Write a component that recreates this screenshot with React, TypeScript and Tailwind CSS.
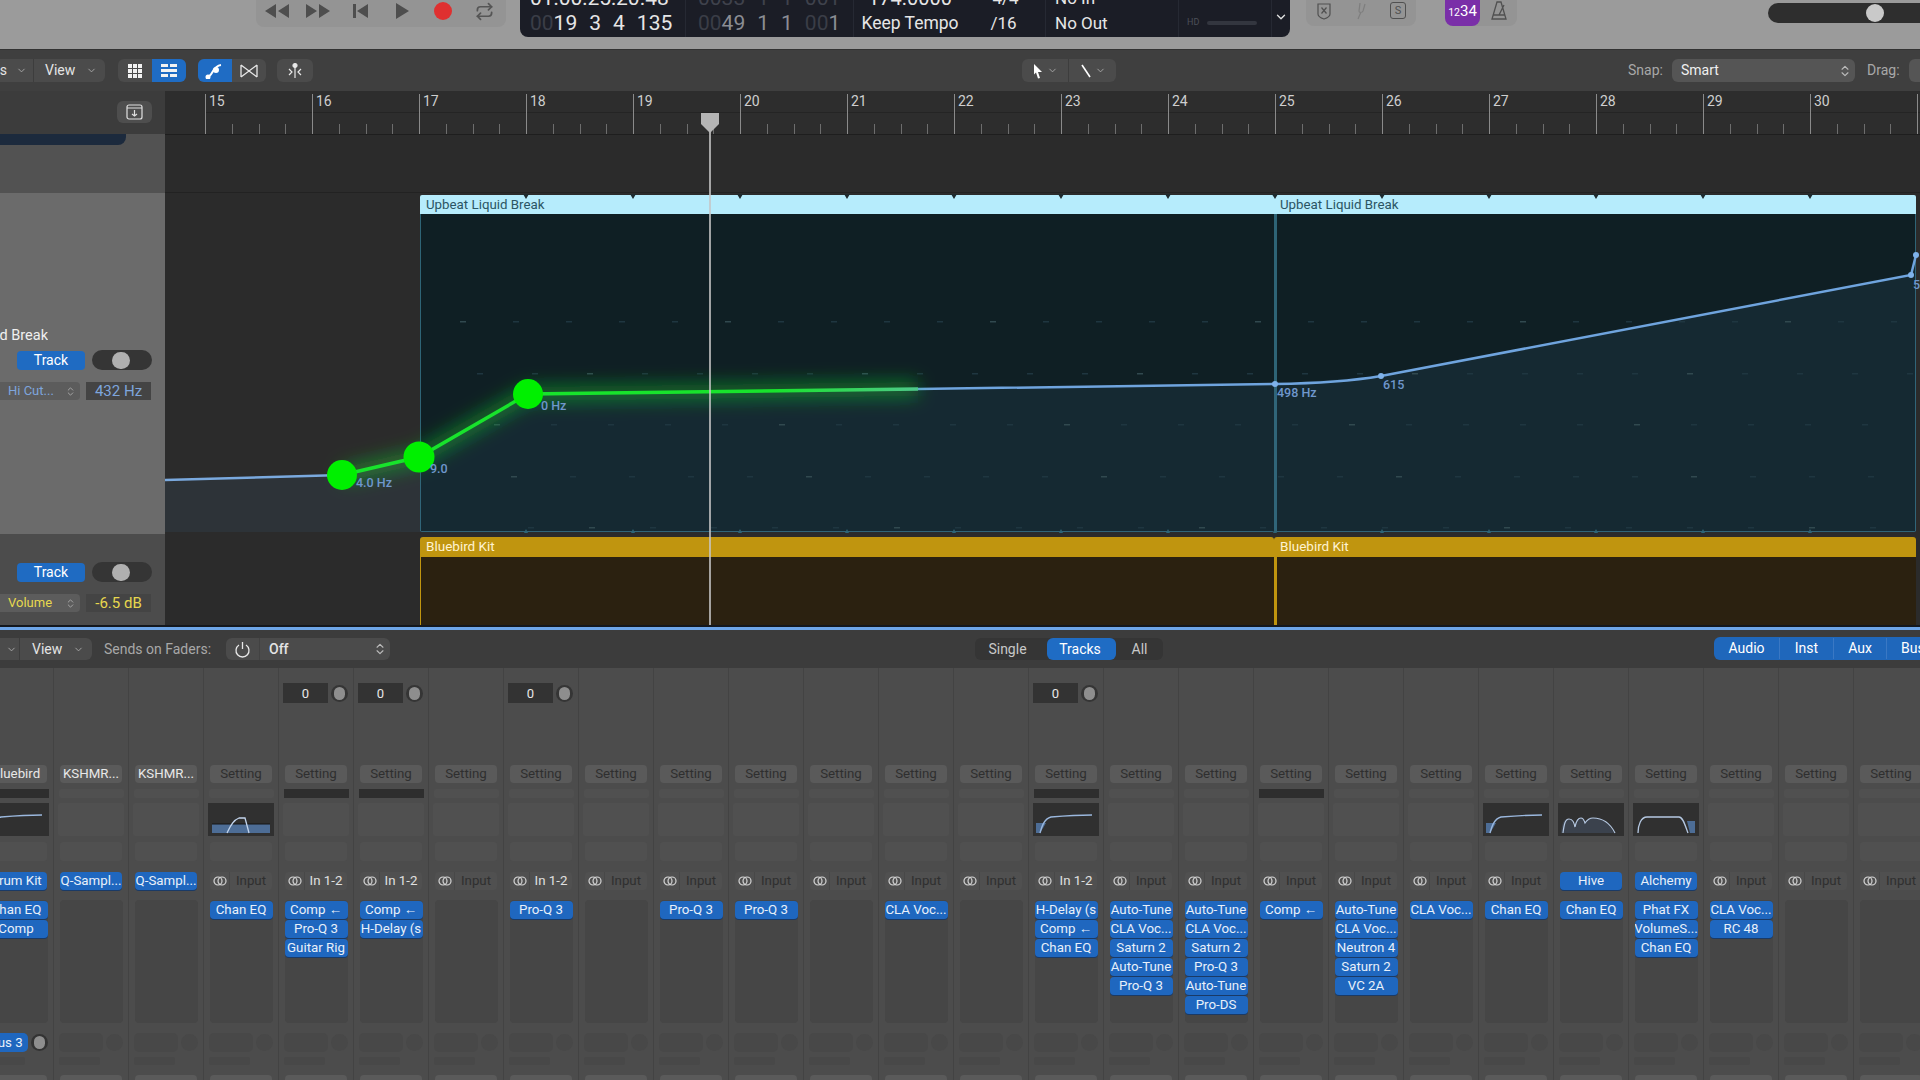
import { Repeat, ChevronDown, ChevronsUpDown } from 'lucide-react';

// ── Bars shown in the ruler
const BARS = [15, 16, 17, 18, 19, 20, 21, 22, 23, 24, 25, 26, 27, 28, 29, 30, 31];

type Eq = 'hp' | 'bell' | 'hive' | 'band';

interface StripData {
  top: string;
  gain?: boolean;
  bar?: boolean;
  eq?: Eq;
  input?: string;
  inst?: string;
  plugins?: string[];
  send?: string;
}

const STRIPS: StripData[] = [
  { top: 'Bluebird', bar: true, eq: 'hp', inst: 'Drum Kit', plugins: ['Chan EQ', 'Comp'], send: 'Bus 3' },
  { top: 'KSHMR...', inst: 'Q-Sampl...' },
  { top: 'KSHMR...', inst: 'Q-Sampl...' },
  { top: 'Setting', eq: 'bell', input: 'Input', plugins: ['Chan EQ'] },
  { top: 'Setting', gain: true, bar: true, input: 'In 1-2', plugins: ['Comp ←', 'Pro-Q 3', 'Guitar Rig'] },
  { top: 'Setting', gain: true, bar: true, input: 'In 1-2', plugins: ['Comp ←', 'H-Delay (s'] },
  { top: 'Setting', input: 'Input' },
  { top: 'Setting', gain: true, input: 'In 1-2', plugins: ['Pro-Q 3'] },
  { top: 'Setting', input: 'Input' },
  { top: 'Setting', input: 'Input', plugins: ['Pro-Q 3'] },
  { top: 'Setting', input: 'Input', plugins: ['Pro-Q 3'] },
  { top: 'Setting', input: 'Input' },
  { top: 'Setting', input: 'Input', plugins: ['CLA Voc...'] },
  { top: 'Setting', input: 'Input' },
  { top: 'Setting', gain: true, bar: true, eq: 'hp', input: 'In 1-2', plugins: ['H-Delay (s', 'Comp ←', 'Chan EQ'] },
  { top: 'Setting', input: 'Input', plugins: ['Auto-Tune', 'CLA Voc...', 'Saturn 2', 'Auto-Tune', 'Pro-Q 3'] },
  { top: 'Setting', input: 'Input', plugins: ['Auto-Tune', 'CLA Voc...', 'Saturn 2', 'Pro-Q 3', 'Auto-Tune', 'Pro-DS'] },
  { top: 'Setting', bar: true, input: 'Input', plugins: ['Comp ←'] },
  { top: 'Setting', input: 'Input', plugins: ['Auto-Tune', 'CLA Voc...', 'Neutron 4', 'Saturn 2', 'VC 2A'] },
  { top: 'Setting', input: 'Input', plugins: ['CLA Voc...'] },
  { top: 'Setting', eq: 'hp', input: 'Input', plugins: ['Chan EQ'] },
  { top: 'Setting', eq: 'hive', inst: 'Hive', plugins: ['Chan EQ'] },
  { top: 'Setting', eq: 'band', inst: 'Alchemy', plugins: ['Phat FX', 'VolumeS...', 'Chan EQ'] },
  { top: 'Setting', input: 'Input', plugins: ['CLA Voc...', 'RC 48'] },
  { top: 'Setting', input: 'Input' },
  { top: 'Setting', input: 'Input' },
];

function Chevron({ className = '' }: { className?: string }) {
  return <ChevronDown size={11} strokeWidth={2} className={className} />;
}

function TransportIcon({ d }: { d: string }) {
  return (
    <div className="flex w-[41.6px] justify-center">
      <svg width="28" height="20" viewBox="0 0 28 20" fill="#4e4e4e">
        <path d={d} />
      </svg>
    </div>
  );
}

function TransportBar() {
  return (
    <div className="flex h-[27px] w-[250px] items-start rounded-b-lg bg-[#949494] pt-[1px] ml-[256px]">
      <TransportIcon d="M13 3v14L2 10zM26 3v14L15 10z" />
      <TransportIcon d="M2 3v14l11-7zM15 3v14l11-7z" />
      <TransportIcon d="M7 3h3v14H7zM22 3v14L11 10z" />
      <TransportIcon d="M8 2v16l13-8z" />
      <div className="flex w-[41.6px] justify-center pt-[1px]">
        <div className="h-[18px] w-[18px] rounded-full bg-[#df3030]" />
      </div>
      <div className="flex w-[41.6px] justify-center pt-[1px]">
        <Repeat size={19} strokeWidth={2.2} className="text-[#555]" />
      </div>
    </div>
  );
}

function Lcd() {
  return (
    <div className="ml-[14px] flex h-[37px] w-[770px] overflow-hidden rounded-b-lg bg-[#1b1d26] text-[21px] leading-[25px] text-[#e6e6e6]">
      <div className="flex w-[166px] shrink-0 flex-col justify-end pb-[1px] pl-[10px] border-r border-[#262933]">
        <div className="whitespace-nowrap">01:00:25:20.48</div>
        <div className="flex gap-3 whitespace-nowrap">
          <span>
            <span className="text-[#3a3d47]">00</span>19
          </span>
          <span>3</span>
          <span>4</span>
          <span>135</span>
        </div>
      </div>
      <div className="flex w-[168px] shrink-0 flex-col justify-end pb-[1px] pl-[12px] text-[#8b8d94] border-r border-[#262933]">
        <div className="flex gap-3 whitespace-nowrap text-[#3f424c]">
          <span>0033</span>
          <span>1</span>
          <span>1</span>
          <span>001</span>
        </div>
        <div className="flex gap-3 whitespace-nowrap">
          <span>
            <span className="text-[#3a3d47]">00</span>49
          </span>
          <span>1</span>
          <span>1</span>
          <span>
            <span className="text-[#3a3d47]">00</span>1
          </span>
        </div>
      </div>
      <div className="flex w-[112px] shrink-0 flex-col items-center justify-end pb-[1px] text-[17.5px]">
        <div className="text-[20px]">174.0000</div>
        <div>Keep Tempo</div>
      </div>
      <div className="flex w-[80px] shrink-0 flex-col items-center justify-end pb-[1px] text-[17px] border-r border-[#262933]">
        <div>4/4</div>
        <div className="pr-[4px]">/16</div>
      </div>
      <div className="flex w-[133px] shrink-0 flex-col justify-end pb-[1px] pl-[9px] text-[17px] border-r border-[#262933]">
        <div>No In</div>
        <div>No Out</div>
      </div>
      <div className="flex w-[93px] shrink-0 items-center gap-2 pl-[8px] pt-[8px] border-r border-[#262933]">
        <span className="text-[9px] leading-none text-[#4c4f58]">HD</span>
        <div className="h-[4px] w-[50px] rounded-full bg-[#33363f]" />
      </div>
      <div className="flex flex-1 items-center justify-center pb-[3px]">
        <ChevronDown size={14} strokeWidth={2.4} className="text-[#ddd]" />
      </div>
    </div>
  );
}

function HeaderRight() {
  return (
    <>
      <div className="ml-[16px] flex h-[26px] w-[110px] items-start justify-between rounded-b-lg bg-[#949494] px-[10px] pt-[2px]">
        <svg width="16" height="18" viewBox="0 0 16 18" fill="none" stroke="#505050" strokeWidth="1.2">
          <path d="M2 2h12v10c0 2-3 4-6 5-3-1-6-3-6-5z" />
          <path d="M5.5 5.5l5 6M10.5 5.5l-5 6" />
        </svg>
        <svg width="16" height="18" viewBox="0 0 16 18" fill="none" stroke="#7e7e7e" strokeWidth="1.2">
          <path d="M7 1l-1 8c0 2 3 2 4 0l2-7M8 10l-3 7" />
        </svg>
        <div className="flex h-[17px] w-[16px] items-center justify-center rounded-[3px] border border-[#505050] text-[11px] leading-none text-[#505050]">
          S
        </div>
      </div>
      <div className="ml-[29px] flex h-[26px] w-[72px] items-start rounded-b-lg bg-[#949494]">
        <div className="flex h-[26px] w-[35px] items-baseline justify-center rounded-b-lg bg-[#7a2fa8] pt-[4px] text-[15px] leading-none text-white">
          <span className="text-[10.5px]">12</span>34
        </div>
        <div className="flex flex-1 justify-center pt-[1px]">
          <svg width="18" height="20" viewBox="0 0 18 20" fill="none" stroke="#505050" strokeWidth="1.3">
            <path d="M7 1h4l5 17H2zM3 14h12M9 14l5-10" />
          </svg>
        </div>
      </div>
      <div className="relative ml-[251px] mt-[3px] h-[20px] w-[160px] rounded-l-full bg-[#2e2e2e]">
        <div className="absolute left-[98px] top-[1px] h-[18px] w-[18px] rounded-full bg-[#c9c9c9]" />
      </div>
    </>
  );
}

function ToolGroupBtn({ active, children }: { active?: boolean; children: React.ReactNode }) {
  return (
    <div className={active ? 'flex h-full w-[34px] items-center justify-center bg-[#1f6cc4]' : 'flex h-full w-[34px] items-center justify-center'}>
      {children}
    </div>
  );
}

function Toolbar() {
  return (
    <div className="flex h-[42px] shrink-0 items-center border-t border-[#323232] bg-[#3f3f3f] text-[14px] text-[#e4e4e4] [&>*]:shrink-0">
      <div className="flex h-[23px] w-[105px] items-center rounded-r-md bg-[#4b4b4b]">
        <div className="flex h-full w-[34px] shrink-0 items-center justify-end gap-[9px] overflow-hidden border-r border-[#3d3d3d] pr-[6px]">
          <span>Functions</span>
          <Chevron className="shrink-0 text-[#aaa]" />
        </div>
        <span className="ml-[11px]">View</span>
        <Chevron className="ml-[11px] text-[#aaa]" />
      </div>
      <div className="ml-[13px] flex h-[23px] overflow-hidden rounded-md bg-[#4b4b4b]">
        <ToolGroupBtn>
          <svg width="16" height="16" viewBox="0 0 16 16" fill="#f2f2f2">
            <path d="M1 1h4v4H1zM6 1h4v4H6zM11 1h4v4h-4zM1 6h4v4H1zM6 6h4v4H6zM11 6h4v4h-4zM1 11h4v4H1zM6 11h4v4H6zM11 11h4v4h-4z" />
          </svg>
        </ToolGroupBtn>
        <ToolGroupBtn active>
          <svg width="18" height="16" viewBox="0 0 18 16" fill="#f2f2f2">
            <path d="M1 1h7v3H1zM10 1h7v3h-7zM1 6h16v3H1zM1 11h7v3H1zM10 11h7v3h-7z" />
          </svg>
        </ToolGroupBtn>
      </div>
      <div className="ml-[12px] flex h-[23px] overflow-hidden rounded-md bg-[#4b4b4b]">
        <ToolGroupBtn active>
          <svg width="20" height="16" viewBox="0 0 20 16" fill="none" stroke="#fff" strokeWidth="2">
            <path d="M2 14c6 0 5-11 14-12" />
            <circle cx="3" cy="14" r="1.5" fill="#fff" />
            <circle cx="11" cy="7" r="2" fill="#fff" />
          </svg>
        </ToolGroupBtn>
        <ToolGroupBtn>
          <svg width="20" height="16" viewBox="0 0 20 16" fill="none" stroke="#e8e8e8" strokeWidth="1.3">
            <path d="M2 2l16 12M2 14L18 2M2 2v12M18 2v12" />
          </svg>
        </ToolGroupBtn>
      </div>
      <div className="ml-[11px] flex h-[23px] w-[36px] items-center justify-center rounded-md bg-[#4b4b4b]">
        <svg width="18" height="18" viewBox="0 0 18 18" fill="none" stroke="#e8e8e8" strokeWidth="1.2">
          <path d="M9 2v14M3 7l3 3-3 3M15 7l-3 3 3 3" />
          <circle cx="9" cy="3.5" r="2" fill="#e8e8e8" />
        </svg>
      </div>
      <div className="ml-[709px] flex h-[23px] w-[94px] items-center rounded-md bg-[#4b4b4b]">
        <div className="flex h-full w-[47px] items-center justify-center gap-[3px] border-r border-[#3d3d3d]">
          <svg width="12" height="16" viewBox="0 0 12 16" fill="#fff">
            <path d="M2 1l8 8H6l2 6-2 .5-2-6-2 2z" />
          </svg>
          <Chevron className="text-[#aaa]" />
        </div>
        <div className="flex h-full flex-1 items-center justify-center gap-[3px]">
          <svg width="12" height="16" viewBox="0 0 12 16" fill="none" stroke="#fff" strokeWidth="1.6">
            <path d="M2 2l8 12" />
          </svg>
          <Chevron className="text-[#aaa]" />
        </div>
      </div>
      <span className="ml-[512px] w-[39px] text-[#a8a8a8]">Snap:</span>
      <div className="ml-[5px] flex h-[23px] w-[183px] items-center justify-between rounded-md bg-[#555] pl-[9px] pr-[3px] text-[#f0f0f0]">
        <span>Smart</span>
        <ChevronsUpDown size={14} className="text-[#bbb]" />
      </div>
      <span className="ml-[12px] w-[37px] text-[#a8a8a8]">Drag:</span>
      <div className="ml-[5px] h-[23px] w-[20px] rounded-l-md bg-[#555]" />
    </div>
  );
}

function LeftPanel() {
  return (
    <div className="flex w-[165px] shrink-0 flex-col">
      <div className="flex h-[43px] items-start justify-end bg-[#3c3c3c] pr-[13px] pt-[10px]">
        <div className="flex h-[22px] w-[35px] items-center justify-center rounded-md bg-[#4e4e4e]">
          <svg width="17" height="16" viewBox="0 0 17 16" fill="none" stroke="#e0e0e0" strokeWidth="1.2">
            <rect x="1" y="1" width="15" height="14" rx="2" />
            <path d="M1 4h15M8.5 6v6M6 10l2.5 2 2.5-2" />
          </svg>
        </div>
      </div>
      <div className="h-[59px] bg-[#525252]">
        <div className="h-[11px] w-[126px] rounded-br-lg bg-[#1c2a3d]" />
      </div>
      <div className="flex h-[341px] flex-col bg-[#6b6b6b] pt-[132px] text-[14.5px]">
        <div className="-ml-[12px] w-[60px] overflow-hidden whitespace-nowrap leading-[22px] text-[#f0f0f0] [direction:rtl]">
          Upbeat Liquid Break
        </div>
        <AutomationControls param="Hi Cut..." value="432 Hz" color="text-[#7ea5dc]" gap="mt-[3px]" />
      </div>
      <div className="flex h-[91px] flex-col bg-[#4c4c4c] pt-[24px] text-[14px]">
        <AutomationControls param="Volume" value="-6.5 dB" color="text-[#e8d84e]" gap="mt-[4px]" />
      </div>
    </div>
  );
}

function AutomationControls({ param, value, color, gap }: { param: string; value: string; color: string; gap: string }) {
  return (
    <>
      <div className={`flex items-center pl-[17px] ${gap}`}>
        <div className="flex h-[19px] w-[68px] items-center justify-center rounded-[4px] bg-[#1f6bc2] text-[14px] text-white">Track</div>
        <div className="relative ml-[7px] h-[20px] w-[60px] rounded-full bg-[#353535]">
          <div className="absolute left-[20px] top-[1.5px] h-[17px] w-[18px] rounded-full bg-[#b0b0b0]" />
        </div>
      </div>
      <div className="mt-[12px] flex items-center">
        <div className={`flex h-[18px] w-[80px] items-center justify-between rounded-r-[4px] bg-[#5c5c5c] pl-[8px] pr-[4px] text-[13px] ${color}`}>
          <span>{param}</span>
          <ChevronsUpDown size={11} className="text-[#aaa]" />
        </div>
        <div className={`ml-[6px] flex h-[18px] w-[65px] items-center justify-center bg-[#444] text-[15px] ${color}`}>{value}</div>
      </div>
    </>
  );
}

function Ruler() {
  return (
    <div className="flex h-[43px] items-end overflow-hidden bg-[#2d2d2d] pl-[40px]">
      {BARS.map((n) => (
        <div key={n} className="h-[40px] w-[107px] shrink-0 border-l border-[#8a8a8a]">
          <div className="h-[19px] border-b border-[#242424] pl-[3px] text-[14px] leading-[14px] text-[#cfcfcf]">{n}</div>
          <div className="flex h-[21px] items-end">
            <div className="h-[10px] w-[26.75px] border-r border-[#6d6d6d]" />
            <div className="h-[10px] w-[26.75px] border-r border-[#6d6d6d]" />
            <div className="h-[10px] w-[26.75px] border-r border-[#6d6d6d]" />
          </div>
        </div>
      ))}
    </div>
  );
}

const NOTCHES = [526, 633, 740, 847, 954, 1061, 1168, 1275, 1382, 1489, 1596, 1703, 1810];

function Overlay() {
  const dashes: [number, number][] = [];
  [321, 373, 424, 476, 527].forEach((y, r) => {
    for (let x = 460 + r * 17; x < 1910; x += 53 + r * 2) dashes.push([x, y]);
  });
  return (
    <svg className="pointer-events-none absolute left-0 top-0" width="1755" height="534" viewBox="165 91 1755 534" fill="none">
      <defs>
        <filter id="glow" x="-20%" y="-60%" width="140%" height="220%">
          <feGaussianBlur stdDeviation="9" />
        </filter>
        <linearGradient id="greenFade" gradientUnits="userSpaceOnUse" x1="342" y1="0" x2="918" y2="0">
          <stop offset="0.75" stopColor="#18e32c" />
          <stop offset="1" stopColor="#4fc98a" />
        </linearGradient>
      </defs>
      <polygon points="165,480 342,475 419,457 528,394 918,389 1275,384 1381,376 1911,275 1916,255 1916,532 165,532" fill="#3c6e96" fillOpacity="0.13" />
      {dashes.map(([x, y], i) => (
        <rect key={i} x={x} y={y} width="6" height="1.5" fill={i % 5 === 0 ? '#31494f' : '#1f3640'} />
      ))}
      {NOTCHES.map((x) => (
        <g key={x}>
          <polygon points={`${x - 3},194 ${x + 3},194 ${x},199`} fill="#1e2a2e" />
          <polygon points={`${x - 2},533 ${x + 2},533 ${x},529`} fill="#2e6476" />
        </g>
      ))}
      <polyline points="165,480 342,475" stroke="#7aa9de" strokeWidth="2.5" />
      <path d="M918,389 L1275,384 Q1340,383 1381,376 L1911,275 L1916,255" stroke="#6fa4de" strokeWidth="2.5" />
      <polyline points="342,475 419,457 528,394 918,389" stroke="#14d82a" strokeOpacity="0.45" strokeWidth="16" filter="url(#glow)" />
      <polyline points="342,475 419,457 528,394 918,389" stroke="url(#greenFade)" strokeWidth="3.5" />
      <circle cx="342" cy="475" r="15" fill="#00f000" />
      <circle cx="419" cy="457" r="15.5" fill="#00f000" />
      <circle cx="528" cy="394" r="15" fill="#00f000" />
      <circle cx="1275" cy="384" r="3" fill="#7fb2ea" />
      <circle cx="1381" cy="376" r="3" fill="#7fb2ea" />
      <circle cx="1911" cy="275" r="3" fill="#7fb2ea" />
      <circle cx="1916" cy="255" r="3" fill="#7fb2ea" />
      <g fill="#6f97cc" fontSize="12.5" fontFamily="Roboto, sans-serif" fontWeight="500">
        <text x="356" y="487">4.0 Hz</text>
        <text x="430" y="473">9.0</text>
        <text x="541" y="410">0 Hz</text>
        <text x="1277" y="397">498 Hz</text>
        <text x="1383" y="389">615</text>
        <text x="1913" y="289">5</text>
      </g>
      <line x1="710" y1="125" x2="710" y2="625" stroke="#c6c6c6" strokeWidth="1.6" />
      <path d="M701 113h18v11l-9 9-9-9z" fill="#b5b5b5" />
    </svg>
  );
}

function Arrange() {
  return (
    <div className="relative flex flex-1 flex-col bg-[#2b2b2b]">
      <Ruler />
      <div className="h-[59px] border-y border-t-[#1e1e1e] border-b-[#222]" />
      <div className="flex h-[341px] pl-[255px] pt-[2px]">
        <AutomationRegion width="w-[854px]" />
        <AutomationRegion width="w-[642px]" thick />
      </div>
      <div className="flex h-[91px] pl-[255px] pt-[3px]">
        <KitRegion width="w-[854px]" />
        <KitRegion width="w-[642px]" thick />
      </div>
      <Overlay />
    </div>
  );
}

function AutomationRegion({ width, thick }: { width: string; thick?: boolean }) {
  return (
    <div className={`flex h-[337px] shrink-0 flex-col rounded-b-[2px] border-b border-[#2e6476] ${width}`}>
      <div className="h-[19px] shrink-0 rounded-t-[2px] bg-[#b6ecfc] pl-[6px] text-[13.3px] leading-[19px] text-[#2b5563]">Upbeat Liquid Break</div>
      <div className={thick ? 'flex-1 border-l-[3px] border-r border-[#2e6476] bg-[#0f1f24]' : 'flex-1 border-l border-[#2e6476] bg-[#0f1f24]'} />
    </div>
  );
}

function KitRegion({ width, thick }: { width: string; thick?: boolean }) {
  return (
    <div className={`flex h-[88px] shrink-0 flex-col ${width}`}>
      <div className="h-[20px] shrink-0 rounded-t-[3px] bg-[#c0950f] pl-[6px] text-[13.5px] leading-[18px] text-[#fff3cf]">Bluebird Kit</div>
      <div className={thick ? 'flex-1 border-l-[3px] border-[#c0950f] bg-[#2b2110]' : 'flex-1 border-l border-[#c0950f] bg-[#2b2110]'} />
    </div>
  );
}

function MixerBar() {
  return (
    <div className="flex h-[38px] shrink-0 items-center bg-[#3c3c3c] text-[14px] text-[#e4e4e4] [&>*]:shrink-0">
      <div className="flex h-[22px] w-[92px] items-center rounded-r-md bg-[#4b4b4b]">
        <div className="flex h-full w-[20px] items-center justify-end border-r border-[#3d3d3d] pr-[2px]">
          <Chevron className="text-[#aaa]" />
        </div>
        <span className="ml-[12px]">View</span>
        <Chevron className="ml-[11px] text-[#aaa]" />
      </div>
      <span className="ml-[12px] w-[114px] whitespace-nowrap text-[#a8a8a8]">Sends on Faders:</span>
      <div className="ml-[8px] flex h-[22px] w-[164px] items-center rounded-md bg-[#4b4b4b]">
        <div className="flex h-full w-[34px] items-center justify-center border-r border-[#424242]">
          <svg width="17" height="17" viewBox="0 0 17 17" fill="none" stroke="#e8e8e8" strokeWidth="1.3">
            <path d="M5 4a6.5 6.5 0 1 0 7 0M8.5 1v7" />
          </svg>
        </div>
        <span className="ml-[9px] flex-1 font-medium">Off</span>
        <ChevronsUpDown size={14} className="mr-[3px] text-[#bbb]" />
      </div>
      <div className="ml-[585px] flex h-[22px] w-[188px] items-center rounded-md bg-[#353535]">
        <span className="w-[72px] pr-[7px] text-center text-[#c8c8c8]">Single</span>
        <span className="flex h-full w-[69px] items-center justify-center rounded-md bg-[#1f6cc4] pr-[3px] text-white">Tracks</span>
        <span className="flex-1 text-center text-[#c8c8c8]">All</span>
      </div>
      <div className="ml-[551px] flex h-[23px] w-[220px] -translate-y-[1px] items-center overflow-hidden rounded-l-md bg-[#1f67bb] text-white">
        <span className="w-[66px] border-r border-[#3a78c4] text-center">Audio</span>
        <span className="w-[54px] border-r border-[#3a78c4] text-center">Inst</span>
        <span className="w-[53px] border-r border-[#3a78c4] text-center">Aux</span>
        <span className="pl-[14px]">Bus</span>
      </div>
    </div>
  );
}

function EqCurve({ kind }: { kind: Eq }) {
  return (
    <svg width="66" height="33" viewBox="0 0 66 33" fill="none" className="bg-[#303030]">
      {kind === 'hp' && (
        <>
          <path d="M3 30V20h10l-6 10z" fill="#4d6d96" />
          <path d="M7 30c2-7 4-14 11-16 12-1 30-2 41-2" stroke="#9bb8de" strokeWidth="1.4" />
        </>
      )}
      {kind === 'bell' && (
        <>
          <path d="M4 21h58v9H4z" fill="#4d6d96" />
          <path d="M4 21h58" stroke="#141414" strokeWidth="1" />
          <path d="M19 30c3-6 6-13 12-15h6l4 15" stroke="#c2d4ec" strokeWidth="1.3" />
        </>
      )}
      {kind === 'hive' && (
        <>
          <path d="M3 30c1-8 2-14 7-14 4 0 5 4 6 8 1-5 3-9 6-9s3 3 4 5c2-3 4-5 8-5 8 0 16 3 22 15H3z" fill="#46536a" fillOpacity="0.5" />
          <path d="M5 30c1-8 2-14 6-14 4 0 5 4 6 8 1-5 3-9 6-9s3 3 4 5c2-3 4-5 8-5 8 0 16 3 22 15" stroke="#b5c8e2" strokeWidth="1.2" />
        </>
      )}
      {kind === 'band' && (
        <>
          <path d="M54 18h8v12h-5z" fill="#4d6d96" />
          <path d="M5 30c0-8 3-16 9-16h32c4 0 6 8 9 16" stroke="#b5c8e2" strokeWidth="1.3" />
        </>
      )}
    </svg>
  );
}

function LinkIcon() {
  return (
    <svg width="14" height="12" viewBox="0 0 14 12" fill="none" stroke="#d6d6d6" strokeWidth="1.2">
      <circle cx="5" cy="6" r="4" />
      <circle cx="9" cy="6" r="4" />
    </svg>
  );
}

function Strip({ s }: { s: StripData }) {
  const named = s.top !== 'Setting';
  return (
    <div className="flex h-full w-[75px] shrink-0 flex-col items-center overflow-hidden border-r border-[#434343] bg-[#4c4c4c] text-[13.3px] leading-none [&>*]:shrink-0">
      <div className="mt-[15px] flex h-[20px] w-[66px] items-center justify-between">
        {s.gain && (
          <>
            <div className="flex h-[20px] w-[45px] items-center justify-center bg-[#333] text-[13px] text-[#e8e8e8]">0</div>
            <div className="mr-[1px] flex h-[17px] w-[17px] items-center justify-center rounded-full bg-[#353535]">
              <div className="h-[13px] w-[11px] rounded-full bg-[#8e8e8e]" />
            </div>
          </>
        )}
      </div>
      <div
        className={
          named
            ? 'mt-[62px] flex h-[18px] w-[62px] items-center justify-center rounded-[4px] bg-[#5a5a5a] text-[#e8e8e8]'
            : 'mt-[62px] flex h-[18px] w-[62px] items-center justify-center rounded-[4px] bg-[#5a5a5a] text-[#2f2f2f]'
        }
      >
        {s.top}
      </div>
      <div className={s.bar ? 'mt-[6px] h-[9px] w-[65px] bg-[#2e2e2e]' : 'mt-[6px] h-[9px] w-[65px] rounded-[2px] bg-[#505050]'} />
      <div className="mt-[5px] h-[33px] w-[66px]">
        {s.eq ? <EqCurve kind={s.eq} /> : <div className="h-full rounded-[2px] bg-[#505050]" />}
      </div>
      <div className="mt-[6px] h-[19px] w-[62px] rounded-[3px] bg-[#505050]" />
      {s.inst ? (
        <div className="mt-[11px] flex h-[18px] w-[62px] items-center justify-center whitespace-nowrap rounded-[4px] bg-[#1f67bf] text-[#e8f0fa] shadow-[0_1px_0_#1a3a66]">
          {s.inst}
        </div>
      ) : (
        <div className="mt-[11px] flex h-[18px] w-[62px] items-center rounded-[4px] bg-[#505050]">
          <div className="flex h-full w-[20px] items-center justify-center border-r border-[#484848]">
            <LinkIcon />
          </div>
          <span className={s.input === 'Input' ? 'flex-1 text-center text-[#2f2f2f]' : 'flex-1 text-center text-[#e0e0e0]'}>{s.input}</span>
        </div>
      )}
      <div className="mt-[10px] flex h-[123px] w-[63px] flex-col gap-[1px] rounded-[4px] bg-[#464646] pt-[1px]">
        {(s.plugins ?? []).map((p, i) => (
          <div
            key={i}
            className="flex h-[18px] w-[63px] shrink-0 items-center justify-center overflow-hidden whitespace-nowrap rounded-[4px] bg-[#1f67bf] text-[#e8f0fa] shadow-[0_1px_0_#1a3a66]"
          >
            {p}
          </div>
        ))}
      </div>
      <div className="mt-[10px] flex h-[19px] w-[64px] items-center justify-between">
        {s.send ? (
          <div className="flex h-[19px] w-[44px] items-center justify-center rounded-[5px] bg-[#1f67bf] text-[#e8f0fa]">{s.send}</div>
        ) : (
          <div className="h-[19px] w-[44px] rounded-[5px] bg-[#484848]" />
        )}
        <div className={s.send ? 'flex h-[17px] w-[17px] items-center justify-center rounded-full bg-[#333]' : 'h-[17px] w-[17px] rounded-full bg-[#484848]'}>
          {s.send && <div className="h-[13px] w-[11px] rounded-full bg-[#8e8e8e]" />}
        </div>
      </div>
      <div className="mt-[5px] h-[8px] w-[64px]">
        <div className="h-full w-[41px] rounded-[2px] bg-[#484848]" />
      </div>
      <div className="mt-[10px] h-[18px] w-[62px] rounded-[4px] bg-[#5a5a5a]" />
    </div>
  );
}

export default function App() {
  return (
    <div className="flex h-[1080px] w-[1920px] flex-col overflow-hidden bg-[#3c3c3c] font-[Roboto,sans-serif]">
      <div className="flex h-[49px] shrink-0 items-start overflow-hidden bg-[#9b9b9b] [&>*]:shrink-0">
        <TransportBar />
        <Lcd />
        <HeaderRight />
      </div>
      <Toolbar />
      <div className="flex h-[534px] shrink-0 overflow-hidden">
        <LeftPanel />
        <Arrange />
      </div>
      <div className="h-[2px] shrink-0 bg-[#14181e]" />
      <div className="h-[3px] shrink-0 bg-[#6ea6e8]" />
      <MixerBar />
      <div className="-ml-[21px] flex h-[412px] shrink-0">
        {STRIPS.map((s, i) => (
          <Strip key={i} s={s} />
        ))}
      </div>
    </div>
  );
}
